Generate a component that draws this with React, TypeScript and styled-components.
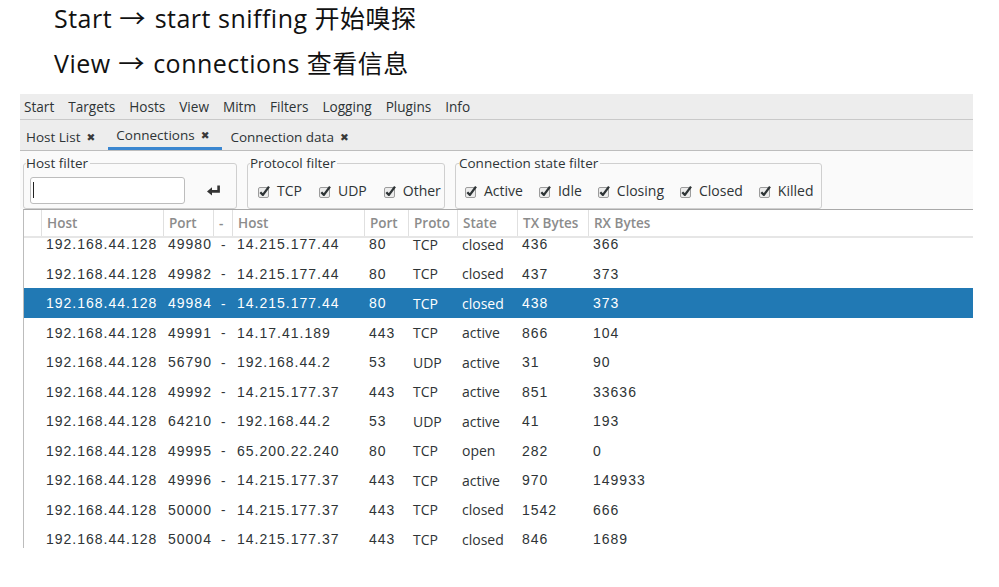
import React from "react";
import styled, { createGlobalStyle } from "styled-components";

const GlobalStyle = createGlobalStyle`
  html, body { margin: 0; padding: 0; background: #ffffff; }
  body { font-family: "Open Sans", "Noto Sans CJK SC", sans-serif; color: #2e3436; }
  * { box-sizing: border-box; }
`;

const Page = styled.div`
  width: 999px;
  height: 587px;
  overflow: hidden;
  background: #ffffff;
`;

const Caption = styled.div`
  height: 94px;
  padding-left: 54px;
`;

const CaptionLine = styled.div`
  height: 45px;
  font-family: "Open Sans", "Noto Sans CJK SC", sans-serif;
  font-size: 25px;
  line-height: 36px;
  letter-spacing: 0.5px;
  font-variant-ligatures: none;
  color: #111111;
  white-space: nowrap;
`;

const Arrow = styled.span`
  display: inline-block;
  margin: 0 2px 0 1px;
  transform: scaleX(1.05);
`;

const Window = styled.div`
  margin-left: 20px;
  width: 953px;
`;

const MenuBar = styled.div`
  display: flex;
  align-items: center;
  gap: 14px;
  height: 26px;
  padding: 0 0 0 4px;
  background: #ededed;
  border-bottom: 1px solid #c9c9c9;
  font-size: 13.6px;
`;

const MenuItem = styled.span`
  color: #2e3436;
  white-space: nowrap;
`;

const TabBar = styled.div`
  display: flex;
  align-items: stretch;
  height: 31px;
  background: #ededed;
  border-bottom: 1px solid #bdbdbd;
`;

const Tab = styled.div<{ $active?: boolean }>`
  display: flex;
  align-items: center;
  gap: 6px;
  padding: 3px 13px 0 8px;
  font-size: 13.5px;
  color: #2e3436;
  white-space: nowrap;
  border-bottom: ${(p) => (p.$active ? "3px solid #3a86d0" : "0")};
  &:first-child { padding-left: 6px; }
`;

const TabClose = styled.span`
  font-family: "DejaVu Sans", sans-serif;
  font-size: 10.5px;
  color: #3a3a3a;
`;

const FilterBar = styled.div`
  display: flex;
  align-items: flex-start;
  gap: 10px;
  height: 58px;
  padding: 5px 0 0 3px;
  background: #fafafa;
`;

const Frame = styled.fieldset<{ $width: number; $padLeft: number }>`
  width: ${(p) => p.$width}px;
  height: 53px;
  margin: 0;
  padding: 0 6px 0 ${(p) => p.$padLeft}px;
  border: 1px solid #cfcfcf;
  border-radius: 3px;
  min-width: 0;
`;

const FrameLabel = styled.legend<{ $shift: number }>`
  margin-left: ${(p) => p.$shift}px;
  padding: 0 2px 0 0;
  font-size: 13.5px;
  line-height: 14px;
  color: #2e3436;
  white-space: nowrap;
`;

const FrameRow = styled.div<{ $gap: number }>`
  display: flex;
  align-items: center;
  height: 27px;
  margin-top: 7px;
  gap: ${(p) => p.$gap}px;
`;

const TextBox = styled.div`
  position: relative;
  width: 155px;
  height: 27px;
  background: #ffffff;
  border: 1px solid #bdbdbd;
  border-radius: 3px;
`;

const Caret = styled.span`
  position: absolute;
  left: 2px;
  top: 4px;
  width: 1px;
  height: 16px;
  background: #222222;
`;

const ReturnIcon = styled.svg`
  margin-left: auto;
  margin-right: 9px;
`;

const CheckItem = styled.span`
  display: inline-flex;
  align-items: center;
  gap: 7px;
  font-size: 14px;
  color: #2e3436;
  white-space: nowrap;
`;

const Table = styled.div`
  margin-left: 3px;
  width: 950px;
  border-left: 1px solid #bcbcbc;
  border-top: 1px solid #a9a9a9;
`;

const columns = "17px 122px 50px 19px 132px 44px 49px 60px 71px 1fr";

const HeaderRow = styled.div`
  display: grid;
  grid-template-columns: ${columns};
  height: 28px;
  background: #ffffff;
  border-bottom: 2px solid #e6e6e6;
`;

const HeaderCell = styled.div<{ $first?: boolean }>`
  display: flex;
  align-items: center;
  padding-left: 5px;
  border-left: ${(p) => (p.$first ? "0" : "1px solid #e0e0e0")};
  font-size: 13.5px;
  font-weight: 600;
  color: #8c8c8c;
  white-space: nowrap;
  overflow: hidden;
`;

const Body = styled.div`
  height: 310px;
  overflow: hidden;
`;

const RowList = styled.div`
  margin-top: -8.7px;
`;

const Row = styled.div<{ $selected?: boolean }>`
  display: grid;
  grid-template-columns: ${columns};
  height: 29.5px;
  align-items: center;
  background: ${(p) => (p.$selected ? "#2179b4" : "transparent")};
  color: ${(p) => (p.$selected ? "#ffffff" : "#2e3436")};
`;

const Cell = styled.div<{ $numeric?: boolean; $pad?: number }>`
  padding-left: ${(p) => p.$pad ?? 5}px;
  white-space: nowrap;
  font-family: ${(p) => (p.$numeric ? '"Liberation Sans", Arial, sans-serif' : '"Open Sans", sans-serif')};
  letter-spacing: ${(p) => (p.$numeric ? "1px" : "0")};
  font-size: 14px;
`;

const CheckBox = () => (
  <svg width="12" height="14" viewBox="0 0 12 14">
    <rect x="0.5" y="3.5" width="10" height="10" rx="1.5" fill="#ececec" stroke="#9c9c9c" />
    <path d="M2.3 8.2 L4.9 10.9 L11 2.6" stroke="#2e3436" strokeWidth="2.3" fill="none" strokeLinejoin="round" />
  </svg>
);

const menus = ["Start", "Targets", "Hosts", "View", "Mitm", "Filters", "Logging", "Plugins", "Info"];

type Conn = [string, string, string, string, string, string, string, string];

const rows: Conn[] = [
  ["49980", "14.215.177.44", "80", "TCP", "closed", "436", "366", ""],
  ["49982", "14.215.177.44", "80", "TCP", "closed", "437", "373", ""],
  ["49984", "14.215.177.44", "80", "TCP", "closed", "438", "373", "sel"],
  ["49991", "14.17.41.189", "443", "TCP", "active", "866", "104", ""],
  ["56790", "192.168.44.2", "53", "UDP", "active", "31", "90", ""],
  ["49992", "14.215.177.37", "443", "TCP", "active", "851", "33636", ""],
  ["64210", "192.168.44.2", "53", "UDP", "active", "41", "193", ""],
  ["49995", "65.200.22.240", "80", "TCP", "open", "282", "0", ""],
  ["49996", "14.215.177.37", "443", "TCP", "active", "970", "149933", ""],
  ["50000", "14.215.177.37", "443", "TCP", "closed", "1542", "666", ""],
  ["50004", "14.215.177.37", "443", "TCP", "closed", "846", "1689", ""],
];

const headers = ["Host", "Port", "-", "Host", "Port", "Proto", "State", "TX Bytes", "RX Bytes"];

export default function App() {
  return (
    <Page>
      <GlobalStyle />
      <Caption>
        <CaptionLine>
          Start <Arrow>→</Arrow> start sniffing 开始嗅探
        </CaptionLine>
        <CaptionLine>
          View <Arrow>→</Arrow> connections 查看信息
        </CaptionLine>
      </Caption>
      <Window>
        <MenuBar>
          {menus.map((m) => (
            <MenuItem key={m}>{m}</MenuItem>
          ))}
        </MenuBar>
        <TabBar>
          <Tab>
            Host List <TabClose>✖</TabClose>
          </Tab>
          <Tab $active>
            Connections <TabClose>✖</TabClose>
          </Tab>
          <Tab>
            Connection data <TabClose>✖</TabClose>
          </Tab>
        </TabBar>
        <FilterBar>
          <Frame $width={214} $padLeft={6}>
            <FrameLabel $shift={-4}>Host filter</FrameLabel>
            <FrameRow $gap={17}>
              <TextBox>
                <Caret />
              </TextBox>
              <ReturnIcon width="14" height="11" viewBox="0 0 14 11">
                <path d="M11.6 0.5 V6.4 H4" stroke="#333" strokeWidth="2.6" fill="none" />
                <polygon points="0,6.4 5,2.2 5,10.6" fill="#333" />
              </ReturnIcon>
            </FrameRow>
          </Frame>
          <Frame $width={198} $padLeft={10}>
            <FrameLabel $shift={-8}>Protocol filter</FrameLabel>
            <FrameRow $gap={17}>
              {["TCP", "UDP", "Other"].map((t) => (
                <CheckItem key={t}>
                  <CheckBox />
                  {t}
                </CheckItem>
              ))}
            </FrameRow>
          </Frame>
          <Frame $width={367} $padLeft={9}>
            <FrameLabel $shift={-6}>Connection state filter</FrameLabel>
            <FrameRow $gap={16}>
              {["Active", "Idle", "Closing", "Closed", "Killed"].map((t) => (
                <CheckItem key={t}>
                  <CheckBox />
                  {t}
                </CheckItem>
              ))}
            </FrameRow>
          </Frame>
        </FilterBar>
        <Table>
          <HeaderRow>
            <HeaderCell $first />
            {headers.map((h, i) => (
              <HeaderCell key={i}>{h}</HeaderCell>
            ))}
          </HeaderRow>
          <Body>
            <RowList>
              {rows.map((r, i) => (
                <Row key={i} $selected={r[7] === "sel"}>
                  <Cell />
                  <Cell $numeric>192.168.44.128</Cell>
                  <Cell $numeric>{r[0]}</Cell>
                  <Cell $pad={8}>-</Cell>
                  <Cell $numeric>{r[1]}</Cell>
                  <Cell $numeric>{r[2]}</Cell>
                  <Cell>{r[3]}</Cell>
                  <Cell>{r[4]}</Cell>
                  <Cell $numeric>{r[5]}</Cell>
                  <Cell $numeric>{r[6]}</Cell>
                </Row>
              ))}
            </RowList>
          </Body>
        </Table>
      </Window>
    </Page>
  );
}
